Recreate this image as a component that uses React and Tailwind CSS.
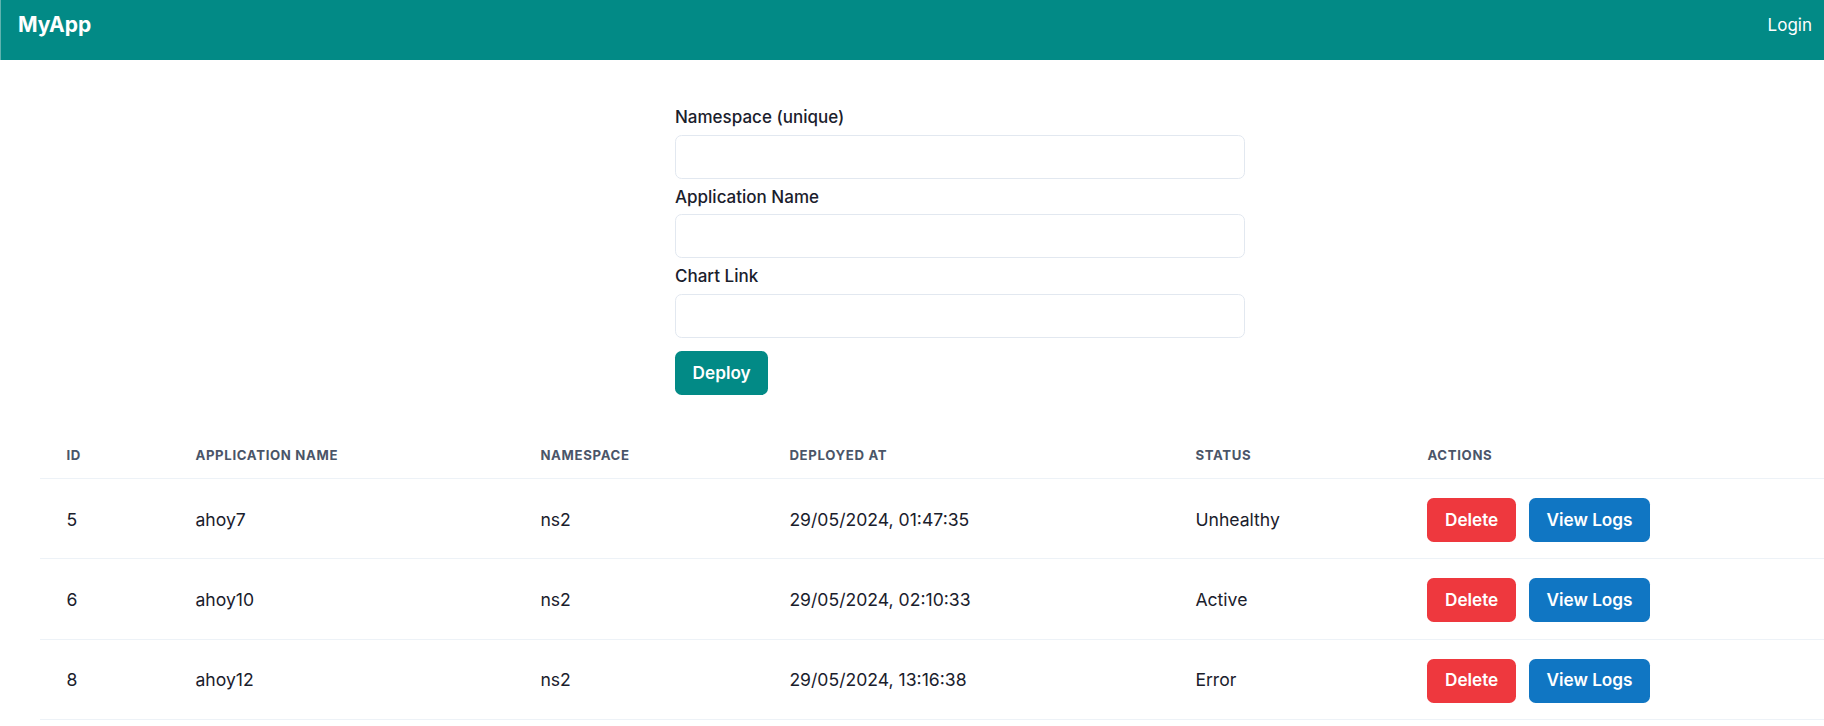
import React from "react";

const rows = [
  { id: 5, name: "ahoy7", ns: "ns2", at: "29/05/2024, 01:47:35", status: "Unhealthy" },
  { id: 6, name: "ahoy10", ns: "ns2", at: "29/05/2024, 02:10:33", status: "Active" },
  { id: 8, name: "ahoy12", ns: "ns2", at: "29/05/2024, 13:16:38", status: "Error" },
];

function Field({ label }) {
  return (
    <div>
      <label className="block text-[17px] font-medium leading-[26.4px] pt-[4.4px] mb-[4.4px] text-[#1a202c]">
        {label}
      </label>
      <input
        type="text"
        className="block w-full h-[44px] border border-[#e2e8f0] rounded-[6.6px] px-[17.6px] outline-none bg-white"
      />
    </div>
  );
}

export default function App() {
  const th =
    "text-left px-[26.4px] py-[13.2px] text-[13.2px] leading-[17.6px] font-bold uppercase tracking-[0.05em] text-[#4a5568] border-b border-[#edf2f7]";
  const td =
    "text-left px-[26.4px] py-[17.6px] text-[17.6px] leading-[26.4px] text-[#1a202c] border-b border-[#edf2f7] align-middle";
  const btn = "h-[44px] px-[17.6px] text-white font-semibold text-[17.2px] rounded-[6.6px]";
  return (
    <div
      className="min-h-screen w-full overflow-hidden bg-white"
      style={{ fontFamily: "Inter, 'Noto Sans', 'Liberation Sans', sans-serif" }}
    >
      <div className="h-[60px] bg-[#028a86] border-l border-[#5fb3af] flex justify-between items-start pt-[11px] pl-[17px] pr-[12px]">
        <div className="text-white font-bold text-[21px] leading-[28px]">MyApp</div>
        <div className="text-white text-[17px] leading-[26px] pt-[1px]">Login</div>
      </div>

      <div className="w-[1920px] px-[40px] pt-[40px]">
        <div className="w-[570px] mx-auto">
          <Field label="Namespace (unique)" />
          <Field label="Application Name" />
          <Field label="Chart Link" />
          <button className={`mt-[13.2px] bg-[#028a86] ${btn}`}>Deploy</button>
        </div>

        <table className="mt-[39.5px] w-full table-fixed border-collapse">
          <colgroup>
            <col className="w-[129px]" />
            <col className="w-[345px]" />
            <col className="w-[249px]" />
            <col className="w-[406px]" />
            <col className="w-[232px]" />
            <col />
          </colgroup>
          <thead>
            <tr>
              <th className={th}>ID</th>
              <th className={th}>Application Name</th>
              <th className={th}>Namespace</th>
              <th className={th}>Deployed At</th>
              <th className={th}>Status</th>
              <th className={th}>Actions</th>
            </tr>
          </thead>
          <tbody>
            {rows.map((r) => (
              <tr key={r.id}>
                <td className={`${td} pt-[19px] pb-[16.2px]`}>{r.id}</td>
                <td className={`${td} pt-[19px] pb-[16.2px]`}>{r.name}</td>
                <td className={`${td} pt-[19px] pb-[16.2px]`}>{r.ns}</td>
                <td className={`${td} pt-[19px] pb-[16.2px]`}>{r.at}</td>
                <td className={`${td} pt-[19px] pb-[16.2px]`}>{r.status}</td>
                <td className={`${td} pt-[19px] pb-[16.2px]`}>
                  <div className="flex gap-[13px]">
                    <button className={`bg-[#ee383e] ${btn}`}>Delete</button>
                    <button className={`bg-[#1076c3] ${btn}`}>View Logs</button>
                  </div>
                </td>
              </tr>
            ))}
          </tbody>
        </table>
      </div>
    </div>
  );
}
